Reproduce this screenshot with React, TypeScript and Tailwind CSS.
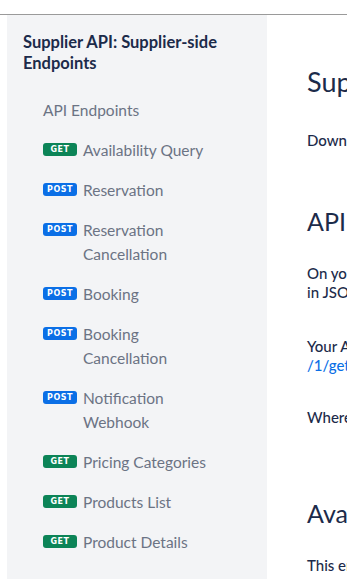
import React from "react";

type Item = { method: "GET" | "POST"; label: string[] };

const items: Item[] = [
  { method: "GET", label: ["Availability Query"] },
  { method: "POST", label: ["Reservation"] },
  { method: "POST", label: ["Reservation", "Cancellation"] },
  { method: "POST", label: ["Booking"] },
  { method: "POST", label: ["Booking", "Cancellation"] },
  { method: "POST", label: ["Notification", "Webhook"] },
  { method: "GET", label: ["Pricing Categories"] },
  { method: "GET", label: ["Products List"] },
  { method: "GET", label: ["Product Details"] },
];

function Badge({ method }: { method: "GET" | "POST" }) {
  return (
    <span
      className={
        "mt-[5px] flex h-[13px] w-[34px] shrink-0 items-center justify-center rounded-[3px] text-[8px] font-bold leading-none tracking-[0.5px] text-white " +
        (method === "GET" ? "bg-[#0c8457]" : "bg-[#0b6fe6]")
      }
      style={{ fontFamily: "'DejaVu Sans', sans-serif" }}
    >
      {method}
    </span>
  );
}

export default function App() {
  return (
    <div
      className="h-[579px] w-[347px] overflow-hidden bg-white"
      style={{ fontFamily: "Lato, 'Open Sans', sans-serif" }}
    >
      <div className="h-[14px] border-b border-[#9a9a9a] box-content" />
      <div className="flex h-[564px]">
        <div className="w-[7px] shrink-0 bg-white" />
        <aside className="w-[260px] shrink-0 bg-[#f3f4f6] pl-[16px] pt-[17px]">
          <h2 className="text-[16.5px] font-bold leading-[21px] text-[#1c2b4a]">
            Supplier API: Supplier-side Endpoints
          </h2>
          <div className="pl-[20px] pt-[16px]">
            <div className="py-[8px] text-[15.5px] leading-[24px] text-[#6b7384]">
              API Endpoints
            </div>
            {items.map((it, i) => (
              <div key={i} className="flex gap-[6px] py-[8px]">
                <Badge method={it.method} />
                <div className="text-[15.5px] leading-[24px] text-[#6b7384]">
                  {it.label.map((l, j) => (
                    <div key={j}>{l}</div>
                  ))}
                </div>
              </div>
            ))}
          </div>
        </aside>
        <main className="min-w-0 flex-1 overflow-hidden whitespace-nowrap pl-[40px] text-[#1c2b4a]">
          <h1 className="pt-[49px] text-[27px] leading-[36px]">Supplier API</h1>
          <p className="pt-[30px] text-[15px] font-medium leading-[20px]">Download</p>
          <h2 className="pt-[54px] text-[25px] leading-[34px]">API Endpoints</h2>
          <p className="pt-[26px] text-[15px] font-medium leading-[19px]">On your</p>
          <p className="text-[15px] font-medium leading-[19px]">in JSON</p>
          <p className="pt-[35px] text-[15px] font-medium leading-[19px]">Your API</p>
          <p className="text-[15px] font-medium leading-[19px] text-[#0b6fe6]">/1/get</p>
          <p className="pt-[33px] text-[15px] font-medium leading-[19px]">Where</p>
          <h2 className="pt-[69px] text-[25px] leading-[34px]">Availability</h2>
          <p className="pt-[26px] text-[15px] font-medium leading-[19px]">This endpoint</p>
        </main>
      </div>
    </div>
  );
}
